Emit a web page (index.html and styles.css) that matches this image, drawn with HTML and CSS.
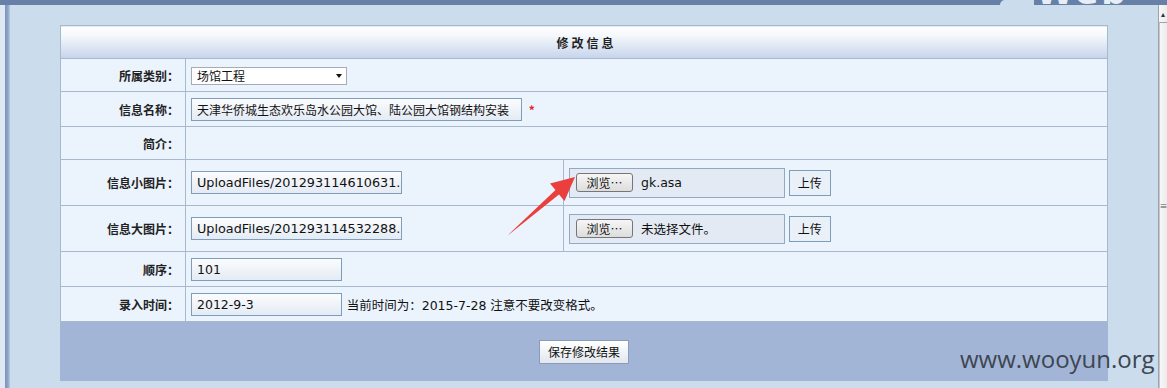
FILE: index.html
```html
<!DOCTYPE html>
<html lang="zh-CN">
<head>
    <meta charset="UTF-8">
    <title>修改信息</title>
    <link rel="stylesheet" href="styles.css">
</head>
<body>

<!-- top frame bar -->
<div class="topbar">
    <div class="topbar-gap"></div>
    <span class="topbar-logo">Web</span>
</div>

<div class="frame">
    <div class="side-left"></div>

    <div class="main">
        <table class="edit-table">
            <tr class="row-head">
                <td colspan="3">修改信息</td>
            </tr>
            <tr class="row-33">
                <td class="label">所属类别：</td>
                <td colspan="2">
                    <span class="select-box">场馆工程</span>
                </td>
            </tr>
            <tr class="row-35">
                <td class="label">信息名称：</td>
                <td colspan="2">
                    <span class="text-input input-name">天津华侨城生态欢乐岛水公园大馆、陆公园大馆钢结构安装</span>
                    <span class="required">*</span>
                </td>
            </tr>
            <tr class="row-33">
                <td class="label">简介：</td>
                <td colspan="2"></td>
            </tr>
            <tr class="row-46">
                <td class="label">信息小图片：</td>
                <td class="cell-path">
                    <span class="text-input input-path">UploadFiles/201293114610631.</span>
                </td>
                <td class="cell-file">
                    <span class="file-box"><span class="browse-btn">浏览…</span>gk.asa</span>
                    <span class="upload-btn">上传</span>
                </td>
            </tr>
            <tr class="row-46">
                <td class="label">信息大图片：</td>
                <td class="cell-path">
                    <span class="text-input input-path">UploadFiles/201293114532288.</span>
                </td>
                <td class="cell-file">
                    <span class="file-box"><span class="browse-btn">浏览…</span>未选择文件。</span>
                    <span class="upload-btn">上传</span>
                </td>
            </tr>
            <tr class="row-35">
                <td class="label">顺序：</td>
                <td colspan="2">
                    <span class="text-input input-short">101</span>
                </td>
            </tr>
            <tr class="row-35">
                <td class="label">录入时间：</td>
                <td colspan="2">
                    <span class="text-input input-short">2012-9-3</span>
                    <span class="hint">当前时间为：2015-7-28 注意不要改变格式。</span>
                </td>
            </tr>
            <tr class="row-foot">
                <td colspan="3">
                    <span class="save-btn">保存修改结果</span>
                </td>
            </tr>
        </table>
    </div>

    <div class="scrollbar">
        <div class="sb-up">▴</div>
        <div class="sb-thumb"><span class="sb-grip">≡</span></div>
    </div>
</div>

<!-- red arrow drawn over the screenshot -->
<svg class="arrow" width="1167" height="388" viewBox="0 0 1167 388">
    <polygon points="507,236 555.5,190 550,183.5 575,177 564.5,201 559,194.5" fill="#ea3f3c"/>
</svg>

<div class="watermark">www.wooyun.org</div>

</body>
</html>
```

FILE: styles.css
```css
body {
    margin: 0;
    width: 1167px;
    height: 388px;
    overflow: hidden;
    background-color: #cbdcec;
    font-family: "Noto Sans CJK SC", "DejaVu Sans", sans-serif;
    font-size: 12px;
    color: #111;
    position: relative;
}

/* top frame bar */
.topbar {
    height: 5px;
    background-color: #6780a8;
    position: relative;
    overflow: hidden;
}

.topbar-gap {
    position: absolute;
    left: 1000px;
    top: 0;
    width: 34px;
    height: 5px;
    background-color: #cbdcec;
    border-top-left-radius: 6px;
}

.topbar-logo {
    position: absolute;
    left: 1036px;
    top: -28px;
    font-family: "DejaVu Sans", sans-serif;
    font-weight: bold;
    font-size: 34px;
    letter-spacing: 3px;
    color: #e8eef6;
}

.frame {
    display: flex;
    height: 383px;
}

.side-left {
    width: 10px;
    flex: none;
    background: linear-gradient(to right, #e0e9f3 0, #e0e9f3 5px, #7c94ba 5px, #8ea5c6 8px, #b9cce2 10px);
}

.main {
    flex: 1;
    padding: 20px 50px 0 50px;
}

/* form table */
.edit-table {
    width: 1048px;
    border-collapse: collapse;
    border: 1px solid #a3b4cb;
}

.edit-table td {
    border: 1px solid #a7b8cf;
    background-color: #ebf3fd;
    padding: 0 0 0 5px;
    vertical-align: middle;
}

.row-head td {
    height: 32px;
    background: linear-gradient(#ffffff, #f4f7fb 30%, #c5d4eb);
    text-align: center;
    font-weight: bold;
    letter-spacing: 3px;
    color: #222;
}

.row-33 td { height: 32px; }
.row-35 td { height: 34px; }
.row-46 td { height: 45px; }

.edit-table td.label {
    width: 118px;
    padding: 0 6px 0 0;
    text-align: right;
    font-weight: bold;
    color: #222;
}

.edit-table td.cell-path {
    width: 372px;
}

.row-foot td {
    height: 58px;
    background-color: #a3b5d6;
    border-color: #a3b5d6;
    text-align: center;
    padding: 0;
}

/* inputs */
.text-input {
    display: inline-block;
    box-sizing: border-box;
    height: 23px;
    line-height: 21px;
    padding: 0 5px;
    border: 1px solid #7f9db9;
    background: linear-gradient(#fbfcfe, #e4ebf4);
    white-space: nowrap;
    overflow: hidden;
    vertical-align: middle;
}

.input-name {
    width: 331px;
}

.input-path {
    width: 211px;
    padding: 0 2px 0 5px;
    font-family: "DejaVu Sans", sans-serif;
    font-size: 12.8px;
}

.input-short {
    width: 151px;
    font-family: "DejaVu Sans", sans-serif;
    font-size: 12.5px;
}

.required {
    color: #e0242a;
    font-weight: bold;
    margin-left: 4px;
    vertical-align: middle;
}

.hint {
    margin-left: 2px;
    vertical-align: middle;
    font-family: "DejaVu Sans", "Noto Sans CJK SC", sans-serif;
    font-size: 12.5px;
}

.select-box {
    display: inline-block;
    box-sizing: border-box;
    width: 156px;
    height: 18px;
    line-height: 16px;
    padding-left: 5px;
    border: 1px solid #a5acb5;
    background-color: #fff;
    position: relative;
    vertical-align: middle;
}

.select-box::after {
    content: "";
    position: absolute;
    right: 4px;
    top: 6px;
    border-left: 3px solid transparent;
    border-right: 3px solid transparent;
    border-top: 4px solid #111;
}

/* file picker */
.cell-file {
    white-space: nowrap;
}

.file-box {
    display: inline-flex;
    align-items: center;
    box-sizing: border-box;
    width: 216px;
    height: 30px;
    padding-left: 6px;
    border: 1px solid #92a9c6;
    background-color: #e3eaf4;
    font-family: "DejaVu Sans", "Noto Sans CJK SC", sans-serif;
    font-size: 12.5px;
    vertical-align: middle;
}

.browse-btn {
    box-sizing: border-box;
    width: 57px;
    height: 19px;
    line-height: 17px;
    margin-right: 8px;
    text-align: center;
    border: 1px solid #767676;
    border-radius: 3px;
    background: linear-gradient(#f6f6f6, #dddddd);
    font-family: "Noto Sans CJK SC", sans-serif;
    font-size: 12px;
}

.upload-btn {
    display: inline-block;
    box-sizing: border-box;
    width: 42px;
    height: 26px;
    line-height: 24px;
    margin-left: 1px;
    text-align: center;
    border: 1px solid #7f9db9;
    background-color: #e9f0f8;
    vertical-align: middle;
}

.save-btn {
    display: inline-block;
    box-sizing: border-box;
    width: 90px;
    height: 24px;
    line-height: 22px;
    margin-top: 1px;
    border: 1px solid #8a9cb6;
    background: linear-gradient(#ffffff, #e2e7ee);
}

/* right scrollbar */
.scrollbar {
    width: 8px;
    flex: none;
    border-left: 1px solid #9aa4ae;
    background: linear-gradient(to right, #f8f8f8, #ececec);
    display: flex;
    flex-direction: column;
}

.sb-up {
    height: 17px;
    font-size: 8px;
    line-height: 17px;
    text-align: center;
    color: #333;
}

.sb-thumb {
    flex: 1;
    border-top: 1px solid #9aa4ae;
    border-left: 1px solid #c6c6c6;
    display: flex;
    align-items: center;
    justify-content: center;
    font-size: 8px;
    color: #555;
}

/* overlays */
.arrow {
    position: absolute;
    left: 0;
    top: 0;
    pointer-events: none;
}

.watermark {
    position: absolute;
    left: 960px;
    top: 342px;
    font-family: "Open Sans", sans-serif;
    font-size: 24px;
    color: #3d4651;
    white-space: nowrap;
}
```
